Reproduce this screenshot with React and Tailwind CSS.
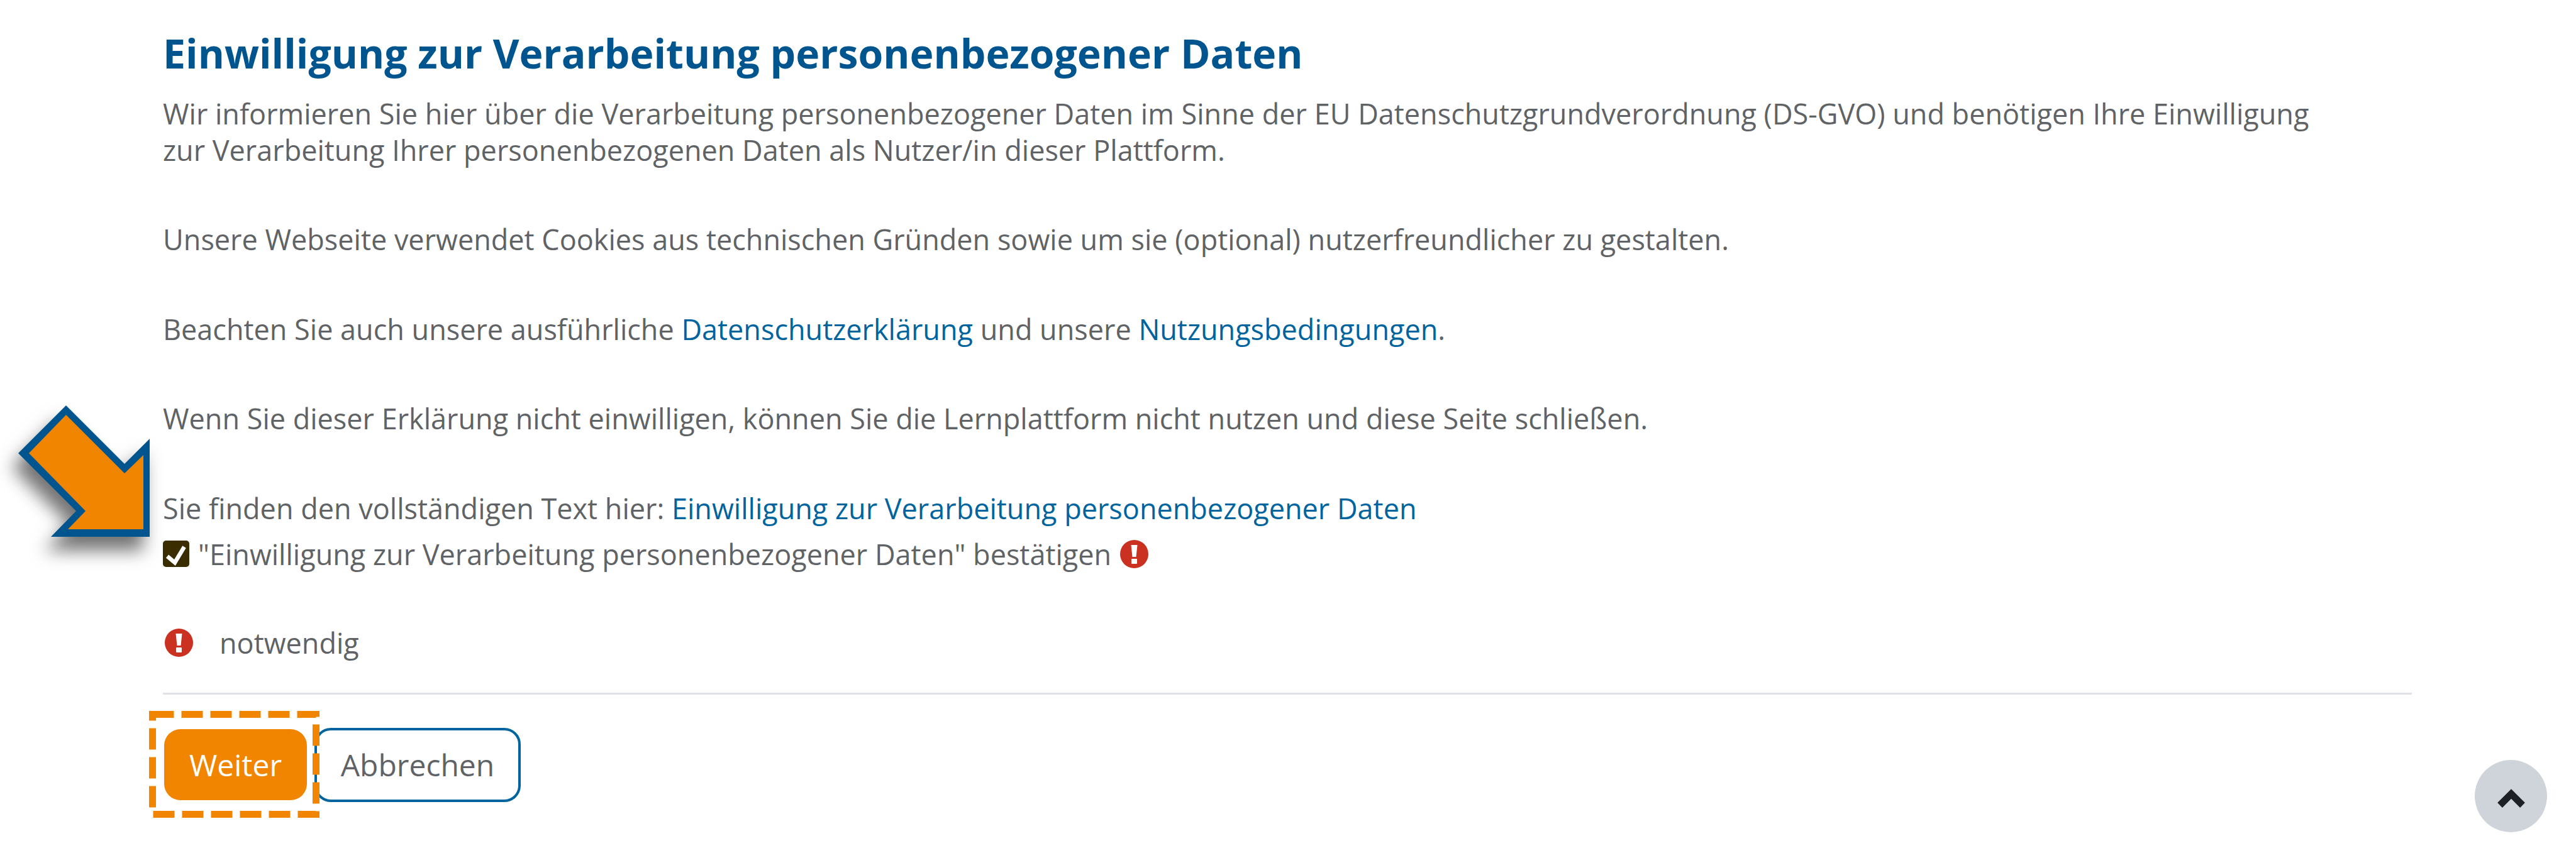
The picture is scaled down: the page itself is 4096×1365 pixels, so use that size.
const Alert = ({ className }) => (
  <svg viewBox="0 0 45 45" className={className}>
    <circle cx="22.5" cy="22.5" r="22.5" fill="#ca3120" />
    <path d="M17.5 8h10l-2 19h-6z" fill="#fff" />
    <rect x="18" y="30" width="9" height="8" rx="1" fill="#fff" />
  </svg>
);

export default function App() {
  return (
    <div className="relative h-[1365px] w-[4096px] overflow-hidden bg-white font-['Open_Sans',sans-serif] text-[45px] leading-[57.6px] text-[#5f6366]">
      <div className="w-[3835px] pl-[259px] pt-[48px]">
        <h2 className="mb-[32px] text-[64.3px] font-bold leading-[72px] text-[#00558f]">
          Einwilligung zur Verarbeitung personenbezogener Daten
        </h2>
        <p className="mb-[85px] max-w-[3460px]">
          Wir informieren Sie hier über die Verarbeitung personenbezogener Daten im Sinne der EU Datenschutzgrundverordnung (DS-GVO) und benötigen Ihre Einwilligung zur Verarbeitung Ihrer personenbezogenen Daten als Nutzer/in dieser Plattform.
        </p>
        <p className="mb-[85px]">
          Unsere Webseite verwendet Cookies aus technischen Gründen sowie um sie (optional) nutzerfreundlicher zu gestalten.
        </p>
        <p className="mb-[85px]">
          Beachten Sie auch unsere ausführliche <a className="text-[#00649f]">Datenschutzerklärung</a> und unsere <a className="text-[#00649f]">Nutzungsbedingungen</a>.
        </p>
        <p className="mb-[85px]">
          Wenn Sie dieser Erklärung nicht einwilligen, können Sie die Lernplattform nicht nutzen und diese Seite schließen.
        </p>
        <p>
          Sie finden den vollständigen Text hier: <a className="text-[#00649f]">Einwilligung zur Verarbeitung personenbezogener Daten</a>
        </p>
        <div className="mt-[15px] flex items-center">
          <span className="flex h-[42px] w-[42px] items-center justify-center rounded-[5px] bg-[#3a2e00]">
            <svg viewBox="0 0 42 42" className="h-[42px] w-[42px]">
              <path d="M7 25l12 10L34 10" fill="none" stroke="#fff" strokeWidth="6.5" />
            </svg>
          </span>
          <span className="ml-[14px]">"Einwilligung zur Verarbeitung personenbezogener Daten" bestätigen</span>
          <Alert className="ml-[14px] h-[45px] w-[45px]" />
        </div>
        <div className="mt-[84px] flex items-center">
          <Alert className="ml-[3px] h-[45px] w-[45px]" />
          <span className="ml-[42px]">notwendig</span>
        </div>
        <div className="mt-[50px] h-[3px] bg-[#dee2e6]" />
        <div className="ml-[2px] mt-[53px] flex items-center">
          <button className="h-[113px] w-[227px] rounded-[26px] bg-[#f18500] text-center text-[48px] text-white">
            Weiter
          </button>
          <button className="ml-[12px] h-[118px] w-[328px] rounded-[26px] border-[4px] border-[#00649f] bg-white text-center text-[48px] text-[#5f6366]">
            Abbrechen
          </button>
        </div>
      </div>

      <svg className="absolute left-[237px] top-[1131px]" width="271" height="170" viewBox="0 0 271 170">
        <rect x="5.5" y="5.5" width="260" height="159" fill="none" stroke="#f18500" strokeWidth="11" strokeDasharray="34 12" />
      </svg>

      <svg className="absolute left-0 top-[620px] drop-shadow-[-10px_22px_14px_rgba(0,0,0,0.55)]" width="260" height="260" viewBox="0 620 260 260">
        <polygon points="105,645 29,721 121,813 81,854 238,854 238,698 198,738" fill="#00558f" />
        <polygon points="105,660 46,721 136,813 108,842 228,842 228,724 198,753" fill="#f18500" />
      </svg>

      <div className="absolute left-[3935px] top-[1209px] flex h-[115px] w-[115px] items-center justify-center rounded-full bg-[#ced4da]">
        <svg viewBox="0 0 115 115" className="h-[115px] w-[115px]">
          <path d="M40 72l18-18 18 18" fill="none" stroke="#1d2125" strokeWidth="11" />
        </svg>
      </div>
    </div>
  );
}
